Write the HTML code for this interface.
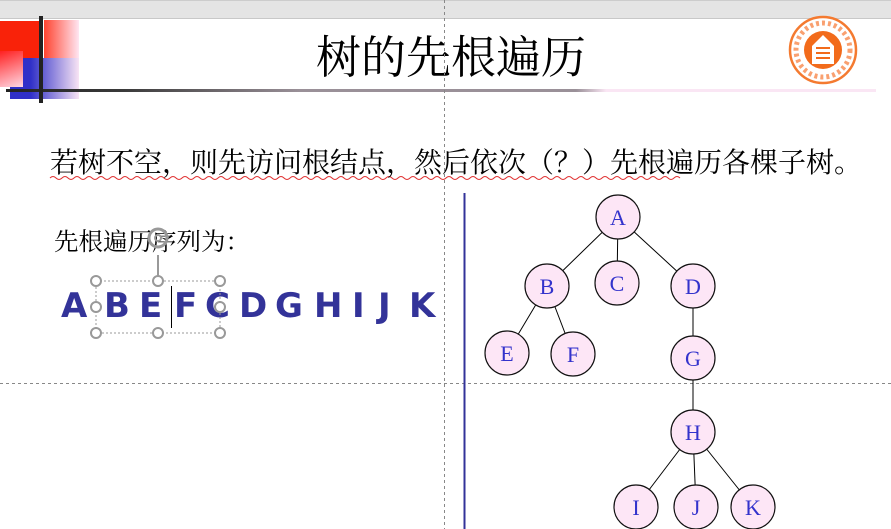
<!DOCTYPE html>
<html><head><meta charset="utf-8"><style>
body{margin:0;width:891px;height:529px;overflow:hidden;background:#fff;position:relative;font-family:"Liberation Serif","Noto Serif CJK SC",serif}
.a{position:absolute}
.L{position:absolute;top:284px;font-family:'DejaVu Sans',sans-serif;font-weight:bold;font-size:34px;line-height:44px;color:#333399}
</style></head><body>
<div class="a" style="left:0;top:0;width:891px;height:17px;background:#e4e4e4;border-top:1px solid #ccc;border-bottom:1px solid #c8c8c8"></div>
<div class="a" style="left:0;top:21px;width:39px;height:50px;background:#f92209"></div>
<div class="a" style="left:44px;top:20px;width:35px;height:50px;background:linear-gradient(90deg,#ff4430,#ffe6f2)"></div>
<div class="a" style="left:10px;top:58px;width:69px;height:41px;background:linear-gradient(90deg,#3030c8 30%,#f8e4f4)"></div>
<div class="a" style="left:0;top:51px;width:23px;height:36px;background:linear-gradient(160deg,#ff2020,#ffd8e4)"></div>
<div class="a" style="left:6px;top:89px;width:294px;height:3px;background:linear-gradient(90deg,#222,#3a3a3a 40%,#9a9098)"></div>
<div class="a" style="left:300px;top:89px;width:276px;height:3px;background:#9a9098"></div>
<div class="a" style="left:576px;top:89px;width:300px;height:3px;background:linear-gradient(90deg,#9a9098,#fae6f4 10%)"></div>
<div class="a" style="left:39px;top:16px;width:4px;height:87px;background:#222"></div>
<div class="a" style="left:316px;top:28px;font-size:45px;line-height:60px;color:#000;white-space:nowrap">树的先根遍历</div>
<svg class="a" style="left:0;top:0" width="891" height="529">
<line x1="444.5" y1="0" x2="444.5" y2="529" stroke="#888" stroke-dasharray="3,3"/>
<line x1="0" y1="383.5" x2="891" y2="383.5" stroke="#888" stroke-dasharray="3,3"/>
<line x1="464.5" y1="193" x2="464.5" y2="529" stroke="#333399" stroke-width="2"/>
<g transform="translate(823,50)"><circle r="33" fill="#fff" stroke="#f47a30" stroke-width="2.5"/><circle r="27" fill="none" stroke="#f9a070" stroke-width="5" stroke-dasharray="3,3"/><circle r="19" fill="#f26b1b"/><path d="M-11 14 L-11 -4 L0 -15 L11 -4 L11 14Z" fill="#fff"/><path d="M-7 -2h14M-7 3h14M-7 8h14" stroke="#f26b1b" stroke-width="2"/></g>
<g stroke="#000" stroke-width="1">
<line x1="618" y1="217" x2="547" y2="286"/><line x1="618" y1="217" x2="617" y2="283"/><line x1="618" y1="217" x2="693" y2="286"/>
<line x1="547" y1="286" x2="507" y2="353"/><line x1="547" y1="286" x2="573" y2="354"/>
<line x1="693" y1="286" x2="693" y2="358"/><line x1="693" y1="358" x2="693" y2="432"/>
<line x1="693" y1="432" x2="636" y2="507"/><line x1="693" y1="432" x2="696" y2="507"/><line x1="693" y1="432" x2="753" y2="507"/>
</g>
<g fill="#fde6f6" stroke="#111" stroke-width="1.2">
<circle cx="618" cy="217" r="22"/><circle cx="547" cy="286" r="22"/><circle cx="617" cy="283" r="22"/><circle cx="693" cy="286" r="22"/>
<circle cx="507" cy="353" r="22"/><circle cx="573" cy="354" r="22"/><circle cx="693" cy="358" r="22"/><circle cx="693" cy="432" r="22"/>
<circle cx="636" cy="507" r="22"/><circle cx="696" cy="507" r="22"/><circle cx="753" cy="507" r="22"/>
</g>
<g fill="#3333cc" font-family="Liberation Serif" font-size="22" text-anchor="middle">
<text x="618" y="225">A</text><text x="547" y="294">B</text><text x="617" y="291">C</text><text x="693" y="294">D</text>
<text x="507" y="361">E</text><text x="573" y="362">F</text><text x="693" y="366">G</text><text x="693" y="440">H</text>
<text x="636" y="515">I</text><text x="696" y="515">J</text><text x="753" y="515">K</text>
</g>
<path d="M50 178 q3 -3 6 0 t6 0 t6 0 t6 0 t6 0 t6 0 t6 0 t6 0 t6 0 t6 0 t6 0 t6 0 t6 0 t6 0 t6 0 t6 0 t6 0 t6 0 t6 0 t6 0 t6 0 t6 0 t6 0 t6 0 t6 0 t6 0 t6 0 t6 0 t6 0 t6 0 t6 0 t6 0 t6 0 t6 0 t6 0 t6 0 t6 0 t6 0 t6 0 t6 0 t6 0 t6 0 t6 0 t6 0 t6 0 t6 0 t6 0 t6 0 t6 0 t6 0 t6 0 t6 0 t6 0 t6 0 t6 0 t6 0 t6 0 t6 0 t6 0 t6 0 t6 0 t6 0 t6 0 t6 0 t6 0 t6 0 t6 0 t6 0 t6 0 t6 0 t6 0 t6 0 t6 0 t6 0 t6 0 t6 0 t6 0 t6 0 t6 0 t6 0 t6 0 t6 0 t6 0 t6 0 t6 0 t6 0 t6 0 t6 0 t6 0 t6 0 t6 0 t6 0 t6 0 t6 0 t6 0 t6 0 t6 0 t6 0 t6 0 t6 0 t6 0 t6 0 t6 0 t6 0 t6 0" stroke="#e03030" fill="none" stroke-width="1"/>
</svg>
<div class="a" style="left:50px;top:146px;font-size:28px;line-height:36px;white-space:nowrap">若树不空，则先访问根结点，然后依次（？）先根遍历各棵子树。</div>
<div class="a" style="left:54px;top:228px;font-size:24.5px;line-height:30px;white-space:nowrap">先根遍历序列为：</div>
<span class="L" style="left:61px">A</span><span class="L" style="left:104px">B</span><span class="L" style="left:139px">E</span><span class="L" style="left:174px">F</span><span class="L" style="left:205px">C</span><span class="L" style="left:239px">D</span><span class="L" style="left:275px">G</span><span class="L" style="left:314px">H</span><span class="L" style="left:352px">I</span><span class="L" style="left:378px">J</span><span class="L" style="left:409px">K</span>
<svg class="a" style="left:0;top:0" width="891" height="529">
<g stroke="#999" fill="none" stroke-width="1"><rect x="96" y="281" width="124" height="52" stroke-dasharray="2,2"/><line x1="158" y1="255" x2="158" y2="281" stroke-width="2"/></g>
<g fill="#fff" stroke="#999" stroke-width="2"><circle cx="96" cy="281" r="5"/><circle cx="158" cy="281" r="5"/><circle cx="220" cy="281" r="5"/><circle cx="96" cy="307" r="5"/><circle cx="220" cy="307" r="5"/><circle cx="96" cy="333" r="5"/><circle cx="158" cy="333" r="5"/><circle cx="220" cy="333" r="5"/></g>
<circle cx="158" cy="238" r="9" fill="none" stroke="#999" stroke-width="3"/><circle cx="158" cy="238" r="3" fill="none" stroke="#999" stroke-width="2"/>
<line x1="171.5" y1="286" x2="171.5" y2="328" stroke="#000"/>
</svg>
</body></html>
